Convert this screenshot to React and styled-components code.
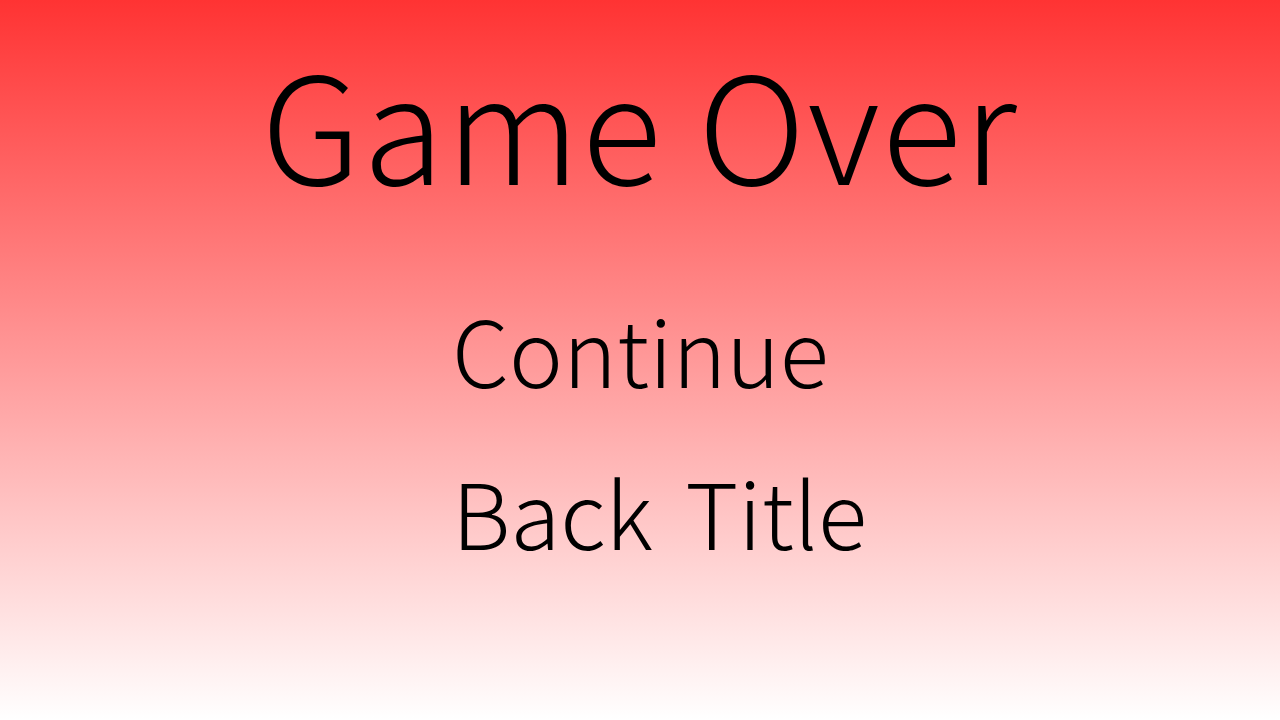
import React from 'react';
import styled, { createGlobalStyle } from 'styled-components';

const GlobalStyle = createGlobalStyle`
  html, body {
    margin: 0;
    padding: 0;
  }
  body {
    font-family: "Noto Sans CJK JP", "Noto Sans", sans-serif;
  }
`

const Screen = styled.div`
  width: 1280px;
  height: 720px;
  overflow: hidden;
  display: flex;
  flex-direction: column;
  align-items: center;
  background: linear-gradient(to bottom, #ff3333 0%, #ffffff 100%);
  color: #000;
`

const Title = styled.h1`
  margin: 0;
  padding-top: 47px;
  font-size: 148px;
  font-weight: 300;
  line-height: 1;
  letter-spacing: 2px;
  white-space: nowrap;
`

const Menu = styled.ul`
  list-style: none;
  margin: 72px 0 0;
  padding: 0;
  width: 376px;
  display: flex;
  flex-direction: column;
`

const MenuItem = styled.li`
  font-size: 91px;
  font-weight: 300;
  line-height: 162px;
  word-spacing: 12px;
  white-space: nowrap;
  cursor: pointer;
`

export default function App() {
  return (
    <>
      <GlobalStyle />
      <Screen>
        <Title>Game Over</Title>
        <Menu>
          <MenuItem>Continue</MenuItem>
          <MenuItem>Back Title</MenuItem>
        </Menu>
      </Screen>
    </>
  );
}
